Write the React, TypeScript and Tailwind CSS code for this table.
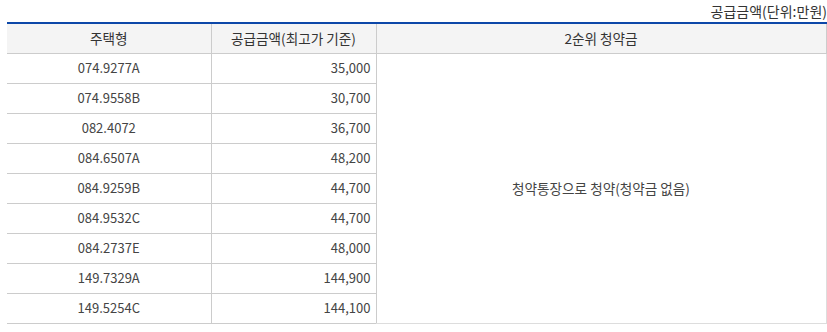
const rows = [
  { type: '074.9277A', price: '35,000' },
  { type: '074.9558B', price: '30,700' },
  { type: '082.4072', price: '36,700' },
  { type: '084.6507A', price: '48,200' },
  { type: '084.9259B', price: '44,700' },
  { type: '084.9532C', price: '44,700' },
  { type: '084.2737E', price: '48,000' },
  { type: '149.7329A', price: '144,900' },
  { type: '149.5254C', price: '144,100' },
];

export default function App() {
  return (
    <div
      className="w-[827px] h-[332px] bg-white pl-[7px] pr-[1px] text-[13px] text-[#444]"
      style={{ fontFamily: '"Noto Sans CJK KR", "Noto Sans", sans-serif' }}
    >
      {/* 단위 표시 */}
      <div className="h-[22px] pt-[2px] flex items-start justify-end text-[14px] leading-[18px] text-[#333] -mr-[1px]">
        공급금액(단위:만원)
      </div>

      <table className="w-[819px] border-collapse table-fixed border-t-2 border-t-[#0c47a8]">
        <colgroup>
          <col className="w-[204px]" />
          <col className="w-[165px]" />
          <col className="w-[450px]" />
        </colgroup>
        <thead>
          <tr className="h-[30px] bg-[#f4f4f4] text-[#333] text-[13.6px]">
            <th className="font-normal border-b border-r border-[#cccccc] text-center">주택형</th>
            <th className="font-normal border-b border-r border-[#cccccc] text-center">공급금액(최고가 기준)</th>
            <th className="font-normal border-b border-r border-[#cccccc] text-center">2순위 청약금</th>
          </tr>
        </thead>
        <tbody>
          {rows.map((r, i) => (
            <tr key={r.type} className="h-[30px]">
              <td className="border-b border-r border-[#cccccc] text-center">{r.type}</td>
              <td className="border-b border-r border-[#cccccc] text-right pr-[5px]">{r.price}</td>
              {i === 0 && (
                <td rowSpan={rows.length} className="border-b border-r border-[#dddddd] text-center text-[13.6px]">
                  청약통장으로 청약(청약금 없음)
                </td>
              )}
            </tr>
          ))}
        </tbody>
      </table>
    </div>
  );
}
